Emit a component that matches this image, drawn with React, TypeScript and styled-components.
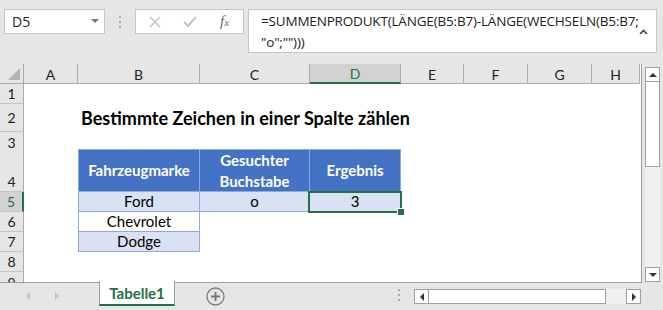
import React from 'react';
import styled, { createGlobalStyle } from 'styled-components';

const GlobalStyle = createGlobalStyle`
    html, body {
        margin: 0;
        padding: 0;
        background: #e6e6e6;
    }
    body {
        width: 663px;
        height: 310px;
        overflow: hidden;
        font-family: Lato, "Liberation Sans", sans-serif;
    }
`;

const COLS = ['A', 'B', 'C', 'D', 'E', 'F', 'G', 'H'];
const COL_WIDTHS = [54, 122, 110, 91, 63, 64, 64, 48];
const ROW_HEIGHTS = [20, 28, 17, 43, 20, 20, 20, 20, 10];

type Kind = 'plain' | 'head' | 'band' | 'white';

interface CellData {
    text?: string;
    kind?: Kind;
    title?: boolean;
    selected?: boolean;
}

// sheet content, keyed "B4" etc.
const cells: Record<string, CellData> = {
    B2: { text: 'Bestimmte Zeichen in einer Spalte zählen', title: true },
    B4: { text: 'Fahrzeugmarke', kind: 'head' },
    C4: { text: 'Gesuchter Buchstabe', kind: 'head' },
    D4: { text: 'Ergebnis', kind: 'head' },
    B5: { text: 'Ford', kind: 'band' },
    C5: { text: 'o', kind: 'band' },
    D5: { text: '3', kind: 'band', selected: true },
    B6: { text: 'Chevrolet', kind: 'white' },
    B7: { text: 'Dodge', kind: 'band' },
};

const App: React.FC = () => {
    return (
        <>
            <GlobalStyle />
            <Window>
                <TopBar>
                    <NameBox>
                        <span>D5</span>
                        <DropArrow />
                    </NameBox>
                    <Grip />
                    <FxBox>
                        <FxIcon>
                            <svg width="12" height="12" viewBox="0 0 12 12">
                                <path d="M1 1 L11 11 M11 1 L1 11" stroke="#c4c4c4" strokeWidth="1.6" fill="none" />
                            </svg>
                        </FxIcon>
                        <FxIcon>
                            <svg width="14" height="12" viewBox="0 0 14 12">
                                <path d="M1 6 L5 10 L13 1" stroke="#c4c4c4" strokeWidth="2" fill="none" />
                            </svg>
                        </FxIcon>
                        <FxLabel>
                            f<small>x</small>
                        </FxLabel>
                    </FxBox>
                    <FormulaBox>
                        <FormulaText>
                            =SUMMENPRODUKT(LÄNGE(B5:B7)-LÄNGE(WECHSELN(B5:B7;
                            <br />
                            "o";"")))
                        </FormulaText>
                        <Collapse>
                            <svg width="9" height="6" viewBox="0 0 9 6">
                                <path d="M1 5 L4.5 1.5 L8 5" stroke="#444" strokeWidth="1.6" fill="none" />
                            </svg>
                        </Collapse>
                    </FormulaBox>
                </TopBar>

                <SheetArea>
                    <Grid>
                        <Corner>
                            <CornerTriangle />
                        </Corner>
                        {COLS.map((c) => (
                            <ColHeader key={c} active={c === 'D'}>{c}</ColHeader>
                        ))}
                        {ROW_HEIGHTS.map((h, i) => {
                            const row = i + 1;
                            return (
                                <React.Fragment key={row}>
                                    <RowHeader active={row === 5} bottom={row === 4} partial={h < 20}>
                                        {row}
                                    </RowHeader>
                                    {COLS.map((c, ci) => {
                                        const d = cells[c + row];
                                        if (!d) return <Cell key={c} />;
                                        if (d.title) return <TitleCell key={c}>{d.text}</TitleCell>;
                                        return (
                                            <TableCell key={c} kind={d.kind || 'plain'} first={ci === 1} top={row === 4}>
                                                <span>{d.text}</span>
                                                {d.selected && (
                                                    <Selection>
                                                        <FillHandle />
                                                    </Selection>
                                                )}
                                            </TableCell>
                                        );
                                    })}
                                </React.Fragment>
                            );
                        })}
                    </Grid>
                    <VScroll>
                        <ScrollButton>
                            <Tri dir="up" />
                        </ScrollButton>
                        <VThumb />
                        <VTrack />
                        <ScrollButton>
                            <Tri dir="down" />
                        </ScrollButton>
                    </VScroll>
                </SheetArea>

                <TabBar>
                    <TabNav>
                        <NavArrow dir="left" />
                        <NavArrow dir="right" />
                    </TabNav>
                    <SheetTab>Tabelle1</SheetTab>
                    <AddSheet>
                        <svg width="19" height="19" viewBox="0 0 19 19">
                            <circle cx="9.5" cy="9.5" r="8.5" stroke="#7a7a7a" strokeWidth="1.3" fill="none" />
                            <path d="M9.5 5 V14 M5 9.5 H14" stroke="#7a7a7a" strokeWidth="2" />
                        </svg>
                    </AddSheet>
                    <TabSpacer />
                    <Grip />
                    <HScroll>
                        <ScrollButton>
                            <Tri dir="left" />
                        </ScrollButton>
                        <HThumb />
                        <HTrack />
                        <ScrollButton>
                            <Tri dir="right" />
                        </ScrollButton>
                    </HScroll>
                </TabBar>
            </Window>
        </>
    );
};

export default App;

const Window = styled.div`
    width: 663px;
    height: 310px;
    display: flex;
    flex-direction: column;
    background: #e6e6e6;
`;

const TopBar = styled.div`
    height: 64px;
    display: flex;
    align-items: flex-start;
    padding: 9px 5px 0 4px;
    box-sizing: border-box;
`;

const NameBox = styled.div`
    width: 101px;
    height: 25px;
    box-sizing: border-box;
    background: #fff;
    border: 1px solid #c6c6c6;
    display: flex;
    align-items: center;
    justify-content: space-between;
    padding: 0 5px 0 7px;
    font-family: "Open Sans", "Liberation Sans", sans-serif;
    font-size: 14px;
    color: #222;
`;

const DropArrow = styled.div`
    width: 0;
    height: 0;
    border-left: 4px solid transparent;
    border-right: 4px solid transparent;
    border-top: 4px solid #777;
    margin-top: -2px;
`;

const Grip = styled.div`
    width: 2px;
    height: 12px;
    margin: 7px 14px 0 14px;
    background: repeating-linear-gradient(to bottom, #a8a8a8 0 2px, transparent 2px 5px);
`;

const FxBox = styled.div`
    width: 109px;
    height: 25px;
    box-sizing: border-box;
    background: #fff;
    border: 1px solid #c6c6c6;
    display: flex;
    align-items: center;
    padding: 0 0 0 13px;
    gap: 22px;
`;

const FxIcon = styled.div`
    display: flex;
    align-items: center;
`;

const FxLabel = styled.div`
    font-family: "Liberation Serif", serif;
    font-style: italic;
    font-size: 15px;
    color: #6a6a6a;
    margin-left: 1px;

    small {
        font-size: 11px;
    }
`;

const FormulaBox = styled.div`
    margin-left: 4px;
    width: 409px;
    height: 44px;
    box-sizing: border-box;
    background: #fff;
    border: 1px solid #c6c6c6;
    display: flex;
    justify-content: space-between;
    padding: 1px 9px 0 12px;
`;

const FormulaText = styled.div`
    font-family: "Open Sans", "Liberation Sans", sans-serif;
    font-size: 13.5px;
    line-height: 21px;
    color: #222;
    white-space: nowrap;
    letter-spacing: -0.18px;
`;

const Collapse = styled.div`
    padding-top: 8px;
`;

const SheetArea = styled.div`
    height: 218px;
    display: flex;
`;

const Grid = styled.div`
    display: grid;
    grid-template-columns: 24px ${COL_WIDTHS.map((w) => w + 'px').join(' ')};
    grid-template-rows: 20px ${ROW_HEIGHTS.map((h) => h + 'px').join(' ')};
    background: #fff;
    border-right: 1px solid #9e9e9e;
    border-bottom: 1px solid #9e9e9e;
    box-sizing: border-box;
    width: 642px;
    height: 219px;
    overflow: hidden;
    font-family: Lato, "Liberation Sans", sans-serif;
`;

const Corner = styled.div`
    background: #e6e6e6;
    border-right: 1px solid #ababab;
    border-bottom: 1px solid #ababab;
    position: relative;
`;

const CornerTriangle = styled.div`
    position: absolute;
    right: 3px;
    bottom: 3px;
    width: 0;
    height: 0;
    border-left: 12px solid transparent;
    border-bottom: 12px solid #b4b4b4;
`;

const ColHeader = styled.div<{ active?: boolean }>`
    background: ${(p) => (p.active ? '#d2d2d2' : '#e6e6e6')};
    color: ${(p) => (p.active ? '#217346' : '#222')};
    border-right: 1px solid #ababab;
    border-bottom: ${(p) => (p.active ? '2px solid #217346' : '1px solid #ababab')};
    box-sizing: border-box;
    display: flex;
    align-items: center;
    justify-content: center;
    font-size: 14px;
    padding-top: 1px;

    &:last-of-type {
        border-right: none;
    }
`;

const RowHeader = styled.div<{ active?: boolean; bottom?: boolean; partial?: boolean }>`
    background: ${(p) => (p.active ? '#d2d2d2' : '#e6e6e6')};
    color: ${(p) => (p.active ? '#217346' : '#222')};
    border-right: ${(p) => (p.active ? '2px solid #217346' : '1px solid #ababab')};
    border-bottom: ${(p) => (p.partial ? 'none' : '1px solid #c4c4c4')};
    box-sizing: border-box;
    display: flex;
    align-items: ${(p) => (p.bottom ? 'flex-end' : p.partial ? 'flex-start' : 'center')};
    justify-content: center;
    font-size: 14px;
    line-height: 15px;
    padding-top: ${(p) => (p.partial ? '3px' : '0')};
    padding-bottom: ${(p) => (p.bottom ? '2px' : '0')};
    overflow: ${(p) => (p.partial ? 'hidden' : 'visible')};
`;

const Cell = styled.div`
    background: #fff;
`;

const TitleCell = styled.div`
    background: #fff;
    white-space: nowrap;
    overflow: visible;
    display: flex;
    align-items: center;
    padding: 0 0 0 3px;
    font-weight: bold;
    font-size: 18px;
    color: #000;
    z-index: 1;
`;

const kindBg: Record<Kind, string> = {
    plain: '#fff',
    head: '#4472c4',
    band: '#d9e1f2',
    white: '#fff',
};

const TableCell = styled.div<{ kind: Kind; first?: boolean; top?: boolean }>`
    position: relative;
    background: ${(p) => kindBg[p.kind]};
    color: ${(p) => (p.kind === 'head' ? '#fff' : '#000')};
    font-weight: ${(p) => (p.kind === 'head' ? 'bold' : 'normal')};
    font-size: 15px;
    line-height: 21px;
    text-align: center;
    box-sizing: border-box;
    border-right: 1px solid #8eaadb;
    border-bottom: 1px solid #8eaadb;
    border-left: ${(p) => (p.first ? '1px solid #8eaadb' : 'none')};
    border-top: ${(p) => (p.top ? '1px solid #8eaadb' : 'none')};
    display: flex;
    align-items: center;
    justify-content: center;
    padding: 0 6px;
`;

const Selection = styled.div`
    position: absolute;
    top: -1px;
    left: -2px;
    right: -2px;
    bottom: -2px;
    border: 2px solid #217346;
    pointer-events: none;
`;

const FillHandle = styled.div`
    position: absolute;
    right: -5px;
    bottom: -5px;
    width: 6px;
    height: 6px;
    background: #217346;
    border: 1px solid #fff;
`;

const VScroll = styled.div`
    margin-left: 3px;
    padding-top: 3px;
    width: 15px;
    display: flex;
    flex-direction: column;
`;

const ScrollButton = styled.div`
    width: 15px;
    height: 15px;
    box-sizing: border-box;
    background: #fff;
    border: 1px solid #a0a0a0;
    display: flex;
    align-items: center;
    justify-content: center;
    flex-shrink: 0;
`;

const Tri = styled.div<{ dir: 'up' | 'down' | 'left' | 'right' }>`
    width: 0;
    height: 0;
    ${(p) =>
        p.dir === 'up'
            ? 'border-left: 4px solid transparent; border-right: 4px solid transparent; border-bottom: 4px solid #333;'
            : p.dir === 'down'
            ? 'border-left: 4px solid transparent; border-right: 4px solid transparent; border-top: 4px solid #333;'
            : p.dir === 'left'
            ? 'border-top: 4px solid transparent; border-bottom: 4px solid transparent; border-right: 4px solid #333;'
            : 'border-top: 4px solid transparent; border-bottom: 4px solid transparent; border-left: 4px solid #333;'}
`;

const VThumb = styled.div`
    height: 85px;
    background: #fff;
    border: 1px solid #a0a0a0;
    border-top: none;
    box-sizing: border-box;
`;

const VTrack = styled.div`
    flex: 1;
    background: #f0f0f0;
`;

const TabBar = styled.div`
    height: 28px;
    display: flex;
    align-items: flex-start;
`;

const TabNav = styled.div`
    width: 99px;
    height: 28px;
    display: flex;
    align-items: center;
    padding-left: 26px;
    box-sizing: border-box;
    gap: 25px;
`;

const NavArrow = styled.div<{ dir: 'left' | 'right' }>`
    width: 0;
    height: 0;
    border-top: 4px solid transparent;
    border-bottom: 4px solid transparent;
    ${(p) => (p.dir === 'left' ? 'border-right: 4px solid #c2c2c2;' : 'border-left: 4px solid #c2c2c2;')}
`;

const SheetTab = styled.div`
    width: 76px;
    height: 25px;
    box-sizing: border-box;
    margin-top: -1px;
    background: #fff;
    border-left: 1px solid #9e9e9e;
    border-right: 1px solid #9e9e9e;
    border-bottom: 2px solid #217346;
    display: flex;
    align-items: center;
    justify-content: center;
    font-family: Lato, "Liberation Sans", sans-serif;
    font-weight: bold;
    font-size: 15px;
    color: #217346;
`;

const AddSheet = styled.div`
    margin-left: 31px;
    margin-top: 5px;
    display: flex;
`;

const TabSpacer = styled.div`
    flex: 1;
`;

const HScroll = styled.div`
    margin-top: 7px;
    margin-right: 22px;
    width: 227px;
    display: flex;
`;

const HThumb = styled.div`
    width: 177px;
    height: 15px;
    background: #fff;
    border: 1px solid #a0a0a0;
    border-left: none;
    box-sizing: border-box;
`;

const HTrack = styled.div`
    flex: 1;
    height: 15px;
    background: #f0f0f0;
`;
